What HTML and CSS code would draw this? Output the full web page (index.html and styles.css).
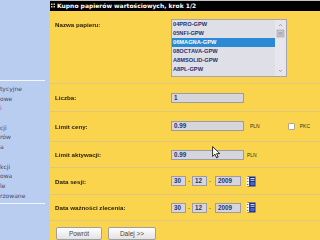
FILE: index.html
```html
<!DOCTYPE html>
<html lang="pl">
<head>
<meta charset="utf-8">
<title>Kupno papierów wartościowych</title>
<link rel="stylesheet" href="styles.css">
</head>
<body>
<div class="page">
  <aside class="side">
    <div class="side-top"></div>
    <div class="side-rule"></div>
    <ul class="side-menu">
      <li>tycyjne</li>
      <li>owe</li>
      <li class="pink">i</li>
      <li class="blank"></li>
      <li>cji</li>
      <li>rów</li>
      <li>a</li>
      <li class="blank"></li>
      <li>kcji</li>
      <li>owa</li>
      <li>le</li>
      <li>rzowane</li>
    </ul>
    <div class="side-rule"></div>
  </aside>
  <main class="main">
    <div class="title">
      <svg class="grip" width="4" height="5" viewBox="0 0 4 5"><rect x="0" y="0.5" width="1.5" height="1.5" fill="#d9cf9a"/><rect x="2.5" y="0.5" width="1.5" height="1.5" fill="#d9cf9a"/><rect x="0" y="3" width="1.5" height="1.5" fill="#d9cf9a"/><rect x="2.5" y="3" width="1.5" height="1.5" fill="#d9cf9a"/></svg>
      <span>Kupno papierów wartościowych, krok 1/2</span>
    </div>
    <div class="row row-list">
      <div class="label">Nazwa papieru:</div>
      <div class="listbox">
        <div class="opts">
          <div class="opt">04PRO-GPW</div>
          <div class="opt">05NFI-GPW</div>
          <div class="opt sel">06MAGNA-GPW</div>
          <div class="opt">08OCTAVA-GPW</div>
          <div class="opt">A8MSOLID-GPW</div>
          <div class="opt">A8PL-GPW</div>
        </div>
        <div class="scroll">
          <svg width="11" height="56" viewBox="0 0 11 56">
            <path d="M4 6 L5.5 4.5 L7 6" fill="none" stroke="#8a8a92" stroke-width="0.8"/>
            <rect x="2" y="10" width="7" height="7" fill="#c9c9d0" stroke="#9c9ca6" stroke-width="0.6"/>
            <path d="M3.5 12.5 H7.5 M3.5 13.7 H7.5 M3.5 14.9 H7.5" stroke="#8a8a94" stroke-width="0.5"/>
            <path d="M4 50 L5.5 51.5 L7 50" fill="none" stroke="#8a8a92" stroke-width="0.8"/>
          </svg>
        </div>
      </div>
    </div>
    <div class="row row-2">
      <div class="label">Liczba:</div>
      <div class="ctrl"><div class="field">1</div></div>
    </div>
    <div class="row row-3">
      <div class="label">Limit ceny:</div>
      <div class="ctrl">
        <div class="field">0.99</div>
        <span class="unit u-wide">PLN</span>
        <span class="check"></span>
        <span class="unit">PKC</span>
      </div>
    </div>
    <div class="row row-4">
      <div class="label">Limit aktywacji:</div>
      <div class="ctrl">
        <div class="field">0.99</div>
        <span class="unit u-near">PLN</span>
      </div>
    </div>
    <div class="row row-5">
      <div class="label">Data sesji:</div>
      <div class="ctrl">
        <div class="field dd">30</div><span class="dash">-</span>
        <div class="field dd">12</div><span class="dash">-</span>
        <div class="field yy">2009</div>
        <svg class="cal" width="10" height="11" viewBox="0 0 10 11"><rect x="1.5" y="0.5" width="8" height="10" fill="#1d2f86"/><rect x="0.5" y="1" width="2.6" height="9" fill="#ffffff"/><circle cx="1.8" cy="2.6" r="0.6" fill="#1d2f86"/><circle cx="1.8" cy="5.5" r="0.6" fill="#1d2f86"/><circle cx="1.8" cy="8.4" r="0.6" fill="#1d2f86"/><path d="M4.5 2.5 H8.5 M4.5 4.3 H8.5" stroke="#ffffff" stroke-width="0.8"/><rect x="4.5" y="6" width="4" height="3.2" fill="#4a68c8"/></svg>
      </div>
    </div>
    <div class="row row-6">
      <div class="label">Data ważności zlecenia:</div>
      <div class="ctrl">
        <div class="field dd">30</div><span class="dash">-</span>
        <div class="field dd">12</div><span class="dash">-</span>
        <div class="field yy">2009</div>
        <svg class="cal" width="10" height="11" viewBox="0 0 10 11"><rect x="1.5" y="0.5" width="8" height="10" fill="#1d2f86"/><rect x="0.5" y="1" width="2.6" height="9" fill="#ffffff"/><circle cx="1.8" cy="2.6" r="0.6" fill="#1d2f86"/><circle cx="1.8" cy="5.5" r="0.6" fill="#1d2f86"/><circle cx="1.8" cy="8.4" r="0.6" fill="#1d2f86"/><path d="M4.5 2.5 H8.5 M4.5 4.3 H8.5" stroke="#ffffff" stroke-width="0.8"/><rect x="4.5" y="6" width="4" height="3.2" fill="#4a68c8"/></svg>
      </div>
    </div>
    <div class="buttons">
      <button class="btn b-back">Powrót</button>
      <button class="btn b-next">Dalej &gt;&gt;</button>
    </div>
  </main>
  <svg class="cursor" width="9" height="13" viewBox="0 0 9 13"><path d="M0.6 0.6 L0.6 10.4 L3 8.2 L4.6 11.8 L6.2 11.1 L4.6 7.6 L7.8 7.6 Z" fill="#ffffff" stroke="#000000" stroke-width="0.8" stroke-linejoin="round"/></svg>
</div>
</body>
</html>
```

FILE: styles.css
```css
html, body {
  margin: 0;
  padding: 0;
}
body {
  width: 320px;
  height: 240px;
  overflow: hidden;
  font-family: "Liberation Sans", Arial, sans-serif;
}
.page {
  position: relative;
  display: flex;
  height: 240px;
}
.side {
  flex: none;
  width: 50px;
  background: #b8cdf0;
}
.side-top {
  height: 80px;
}
.side-rule {
  width: 45px;
  height: 1px;
  background: #f2f6fd;
}
.side-menu {
  list-style: none;
  margin: 0;
  padding: 3px 0 3px;
  font-family: "DejaVu Sans", sans-serif;
  font-size: 6px;
  line-height: 9.7px;
  color: #3c4c72;
}
.side-menu li {
  height: 9.7px;
  white-space: nowrap;
}
.side-menu .pink {
  color: #d8489a;
}
.main {
  flex: 1;
  display: flex;
  flex-direction: column;
  background: #f9d44c;
}
.title {
  height: 10px;
  border-top: 1px solid #c4c4c4;
  background: #000000;
  color: #ffffff;
  font-family: "DejaVu Sans", sans-serif;
  font-weight: bold;
  font-size: 6px;
  display: flex;
  align-items: center;
  gap: 2px;
  padding-left: 1px;
  white-space: nowrap;
}
.row {
  display: grid;
  grid-template-columns: 116px auto;
  align-items: center;
  padding-left: 5px;
  border-bottom: 1px solid #dec87e;
}
.label {
  font-weight: bold;
  font-size: 6.2px;
  color: #2a200c;
  white-space: nowrap;
  will-change: transform;
}
.row-list {
  height: 73px;
  align-items: start;
}
.row-list .label {
  padding-top: 10px;
}
.row-2 { height: 27px; }
.row-3 { height: 29px; }
.row-4 { height: 26px; }
.row-5 { height: 26px; }
.row-6 { height: 25px; }
.listbox {
  margin-top: 8px;
  width: 116px;
  height: 58px;
  box-sizing: border-box;
  border: 1px solid #a4a4b0;
  background: #dfdfe7;
  display: flex;
}
.opts {
  flex: 1;
}
.opt {
  height: 9px;
  line-height: 9px;
  padding-left: 1px;
  font-weight: bold;
  font-size: 5.7px;
  color: #27326c;
}
.opt.sel {
  background: #2a8ad4;
  color: #ffffff;
}
.scroll {
  width: 11px;
  background: #e6e6ec;
}
.scroll svg {
  display: block;
}
.ctrl {
  display: flex;
  align-items: center;
}
.field {
  box-sizing: border-box;
  width: 73px;
  height: 10px;
  border: 1px solid #9c9ca6;
  background: #d5d5db;
  padding-left: 2px;
  font-weight: bold;
  font-size: 6.3px;
  line-height: 8px;
  color: #2a3470;
}
.field.dd {
  width: 15px;
}
.field.yy {
  width: 26px;
}
.dash {
  width: 6px;
  text-align: center;
  font-size: 6px;
  color: #333333;
}
.dash + .field.yy {
  margin-left: 2px;
}
.unit {
  font-size: 5px;
  color: #3a3320;
}
.u-wide {
  margin-left: 6px;
}
.u-near {
  margin-left: 3px;
}
.check {
  box-sizing: border-box;
  width: 7px;
  height: 7px;
  margin-left: 28px;
  margin-right: 5px;
  border: 1px solid #b0a890;
  border-radius: 1px;
  background: #ffffff;
}
.cal {
  display: block;
  margin-left: 5px;
}
.buttons {
  display: flex;
  gap: 6px;
  padding: 6px 0 0 6px;
}
.btn {
  box-sizing: border-box;
  height: 13px;
  padding: 0;
  border: 1px solid #a0a0a0;
  border-radius: 2px;
  background: linear-gradient(#ffffff, #e2e2e2);
  font-family: "Liberation Sans", Arial, sans-serif;
  font-size: 6.5px;
  color: #444444;
}
.b-back { width: 46px; }
.b-next { width: 48px; }
.cursor {
  position: absolute;
  left: 212px;
  top: 146px;
}
```
